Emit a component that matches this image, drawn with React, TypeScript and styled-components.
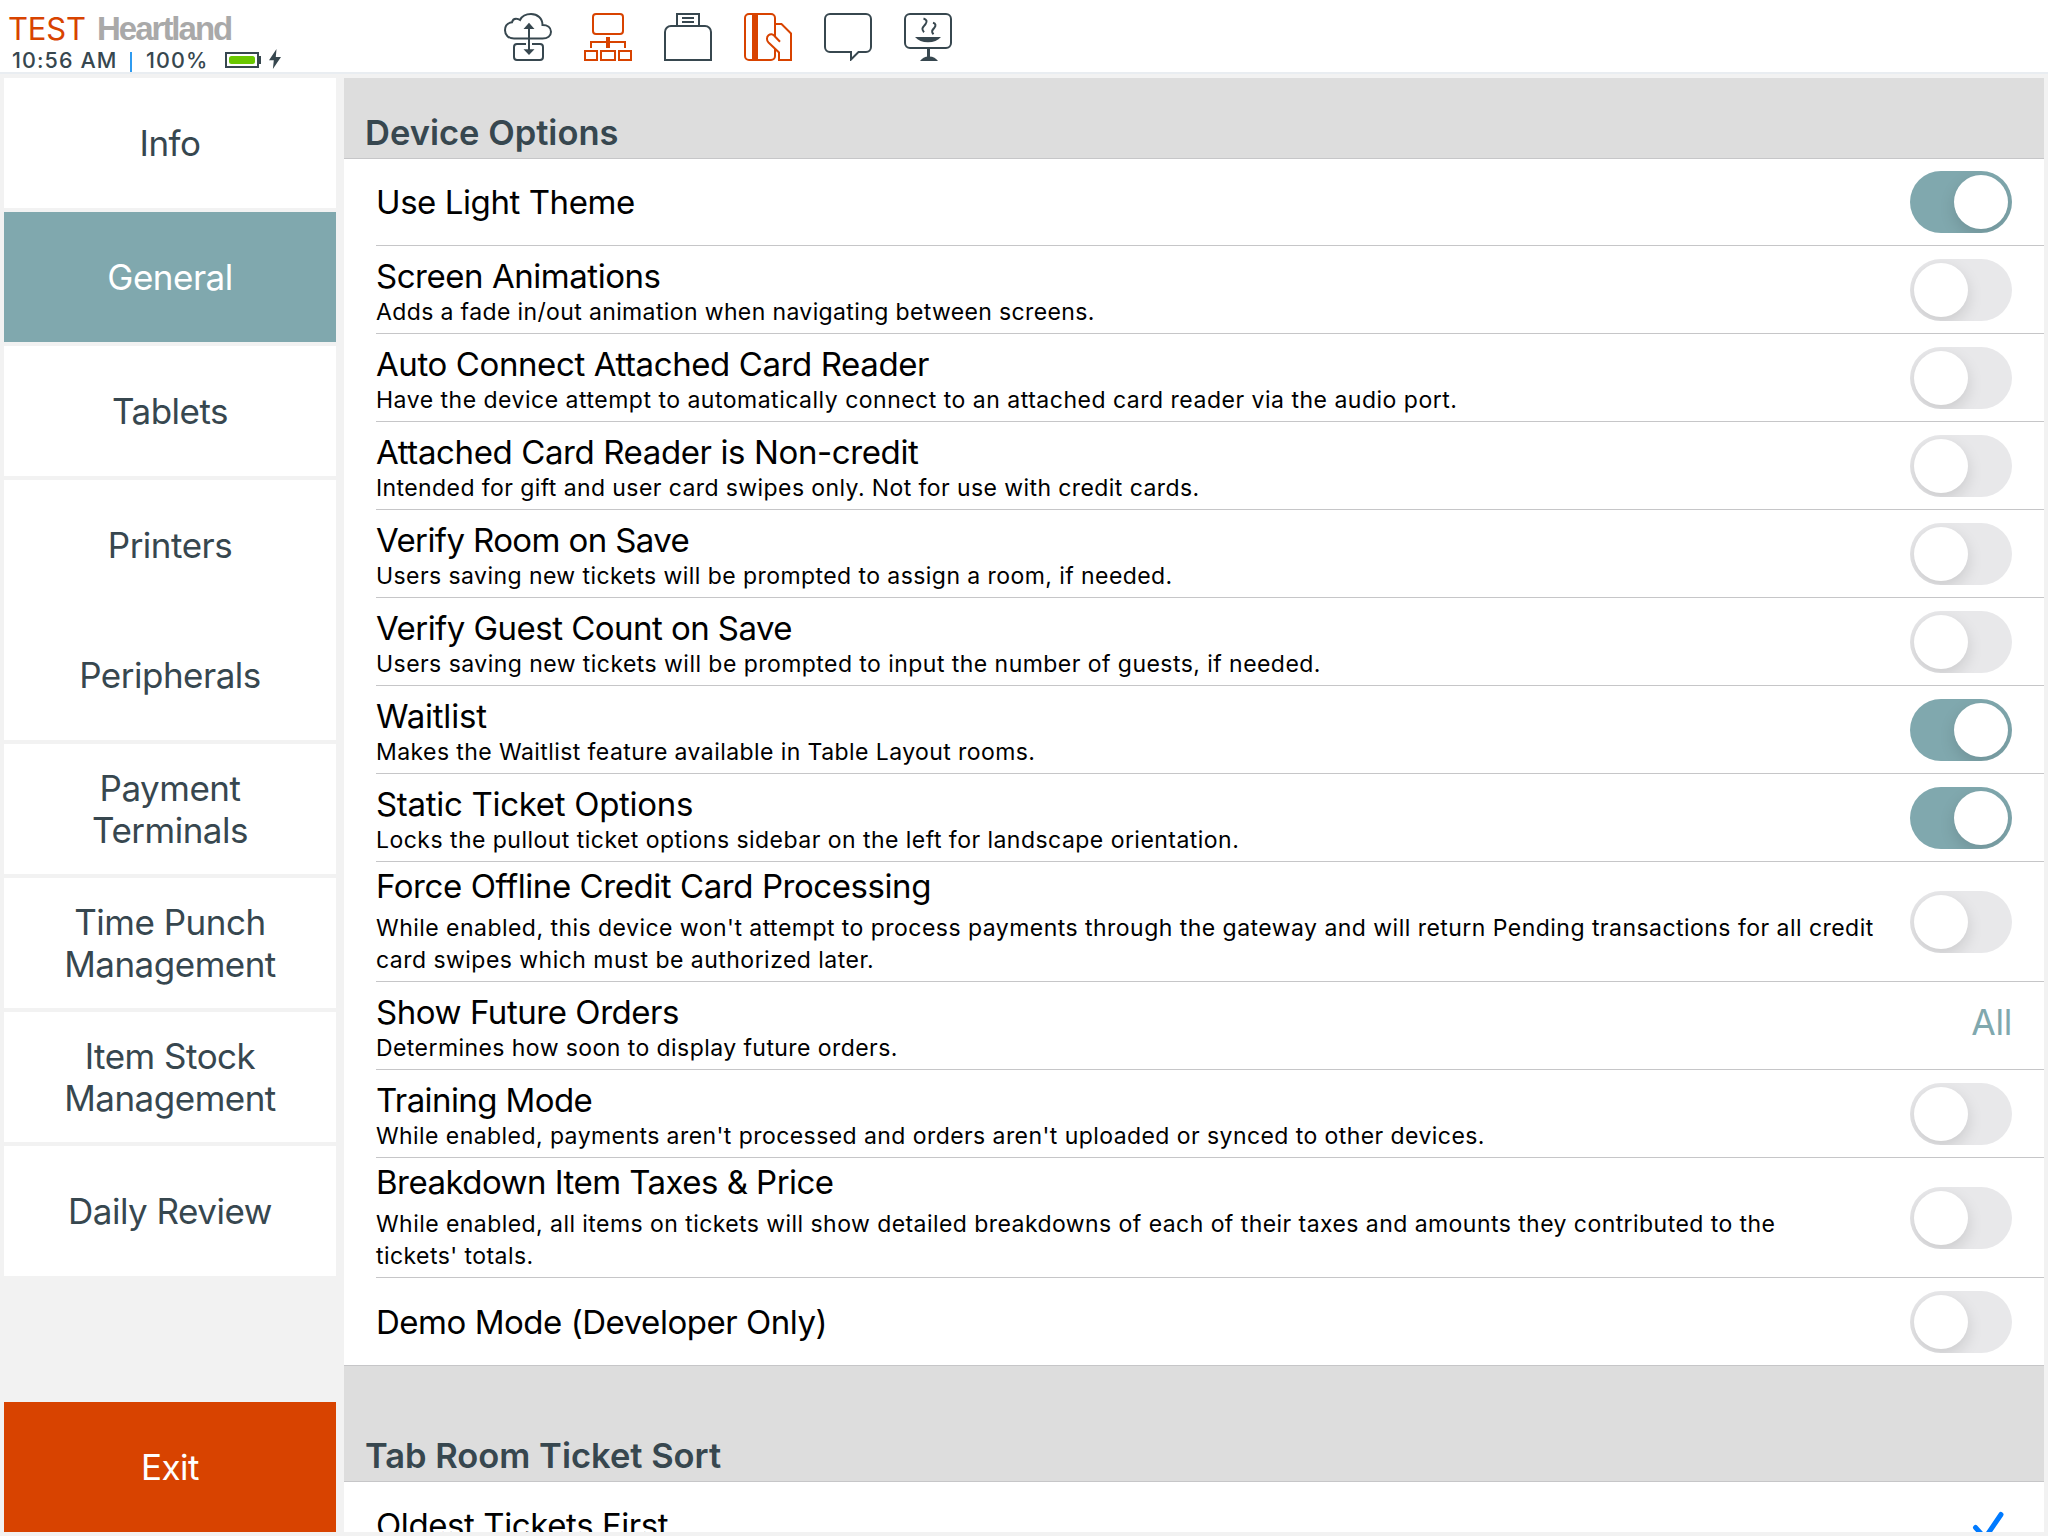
import React, { useState } from "react";
import styled, { createGlobalStyle } from "styled-components";

const ink = "#37474f";
const orange = "#d84300";
const teal = "#80a8ae";
const hairline = "#c6c6c8";

const GlobalStyle = createGlobalStyle`
  *, *::before, *::after { box-sizing: border-box; }
  body {
    margin: 0;
    overflow: hidden;
    background: #f2f2f2;
    font-family: Inter, "Liberation Sans", sans-serif;
    color: #000;
  }
  button { font: inherit; border: 0; margin: 0; padding: 0; background: none; }
`;

const Screen = styled.div`
  width: 2048px;
  height: 1536px;
  display: flex;
  flex-direction: column;
  overflow: hidden;
`;

/* ---------- top bar ---------- */

const TopBar = styled.header`
  flex: none;
  height: 74px;
  display: flex;
  background: #fff;
  border-bottom: 2px solid #e9edf1;
`;

const Status = styled.div`
  width: 504px;
  padding: 9px 0 0 8px;
  display: flex;
  flex-direction: column;
`;

const BrandLine = styled.div`
  height: 39px;
  line-height: 40px;
  display: flex;
  align-items: baseline;
`;

const Mode = styled.span`
  width: 89px;
  font-size: 31px;
  letter-spacing: -0.2px;
  color: ${orange};
`;

const Brand = styled.span`
  font-family: "Liberation Sans", Arial, sans-serif;
  font-weight: 700;
  font-size: 33px;
  letter-spacing: -2px;
  color: #a9a9a9;
`;

const StatusLine = styled.div`
  height: 24px;
  padding-left: 4px;
  display: flex;
  align-items: center;
  font-size: 21.5px;
  font-weight: 500;
  line-height: 24px;
  letter-spacing: 1.1px;
  color: ${ink};
`;

const Clock = styled.span`
  width: 118px;
  white-space: nowrap;
`;

const Bar = styled.i`
  width: 2px;
  height: 20px;
  margin-top: 3px;
  background: #2f9bf0;
`;

const Charge = styled.span`
  width: 79px;
  margin-left: 14px;
`;

const Tools = styled.nav`
  display: flex;
  gap: 32px;
  padding-top: 13px;
`;

const Tool = styled.button<{ $alert?: boolean }>`
  width: 48px;
  height: 48px;
  color: ${(p) => (p.$alert ? orange : ink)};
  svg {
    display: block;
    fill: none;
    stroke: currentColor;
    stroke-width: 2;
  }
`;

/* ---------- body ---------- */

const Body = styled.div`
  flex: 1;
  min-height: 0;
  display: flex;
  gap: 8px;
  padding: 4px;
`;

const Sidebar = styled.aside`
  flex: none;
  width: 332px;
  display: flex;
  flex-direction: column;
  justify-content: space-between;
`;

const NavGroups = styled.div`
  display: flex;
  flex-direction: column;
  gap: 4px;
`;

const NavButton = styled.button<{ $tone?: "active" | "exit" }>`
  width: 100%;
  height: 130px;
  display: flex;
  align-items: center;
  justify-content: center;
  white-space: pre-line;
  text-align: center;
  font-size: 35px;
  line-height: 42px;
  letter-spacing: -0.5px;
  color: ${(p) => (p.$tone ? "#fff" : ink)};
  background: ${(p) => (p.$tone === "active" ? teal : p.$tone === "exit" ? orange : "#fff")};
`;

const Content = styled.main`
  flex: 1;
  min-width: 0;
  overflow: hidden;
  background: #fff;
`;

const SectionHead = styled.h2<{ $height: number }>`
  margin: 0;
  height: ${(p) => p.$height}px;
  padding: 0 0 3px 21px;
  display: flex;
  align-items: flex-end;
  background: #dddddd;
  color: ${ink};
  font-size: 34.5px;
  font-weight: 600;
  line-height: 44px;
  letter-spacing: 0;
`;

const List = styled.div`
  border-top: 1px solid ${hairline};
  border-bottom: 1px solid ${hairline};
`;

const Row = styled.div<{ $height: number }>`
  height: ${(p) => p.$height}px;
  margin-left: 32px;
  padding-right: 32px;
  display: flex;
  justify-content: space-between;
  align-items: center;
  border-bottom: 1px solid ${hairline};
  &:last-child { border-bottom: 0; }
`;

const Label = styled.div<{ $top: number; $bottom: number }>`
  padding-top: ${(p) => p.$top}px;
  padding-bottom: ${(p) => p.$bottom}px;
`;

const Title = styled.div<{ $track: number }>`
  font-size: 33px;
  line-height: 40px;
  letter-spacing: ${(p) => p.$track}px;
  white-space: nowrap;
`;

const Note = styled.div<{ $track: number; $gap: number }>`
  margin-top: ${(p) => p.$gap}px;
  font-size: 23px;
  line-height: 32px;
  letter-spacing: ${(p) => p.$track}px;
  white-space: pre;
`;

const Track = styled.button<{ $on: boolean; $shift: number }>`
  flex: none;
  width: 102px;
  height: 62px;
  margin-top: ${(p) => p.$shift}px;
  padding: 4px;
  display: flex;
  justify-content: ${(p) => (p.$on ? "flex-end" : "flex-start")};
  border-radius: 31px;
  overflow: hidden;
  background: ${(p) => (p.$on ? teal : "#e8e8ea")};
`;

const Knob = styled.span`
  width: 54px;
  height: 54px;
  border-radius: 50%;
  background: #fff;
  box-shadow: 0 6px 16px rgba(0, 0, 0, 0.13);
`;

const Value = styled.span`
  padding-bottom: 5px;
  font-size: 35.5px;
  line-height: 42px;
  letter-spacing: -0.3px;
  color: ${teal};
`;

const Check = styled.svg`
  display: block;
  margin-right: 2px;
  fill: none;
  stroke: #007aff;
  stroke-width: 5;
  stroke-linecap: round;
  stroke-linejoin: round;
`;

/* ---------- icons ---------- */

const Battery = () => (
  <svg width="36" height="16" viewBox="0 0 36 16">
    <rect x="1" y="1" width="32" height="14" fill="none" stroke={ink} strokeWidth="2" />
    <rect x="34" y="4" width="2" height="8" fill={ink} />
    <rect x="4" y="4" width="26" height="8" rx="2.5" fill="#6ac800" />
  </svg>
);

const BoltIcon = styled.svg`
  margin: -2px 0 0 8px;
`;

const Bolt = () => (
  <BoltIcon width="12" height="20" viewBox="0 0 12 20">
    <path d="M7.5 0 0 11.2H4.8L3.9 20 12 8H6.8Z" fill={ink} />
  </BoltIcon>
);

const CloudSync = () => (
  <svg width="48" height="48" viewBox="0 0 48 48">
    <path d="M10 25.5C4.5 25.5 1 22 1 17.2 1 12.6 4 9.8 8 9.3 8.6 6.6 10.6 5.6 12.6 5.8 14 5.9 15 6.4 16 7 18 3 22 1 27 1c6.500 0 11.500 4.500 11.500 11C43.500 12 47 14.500 47 18.700c0 4.200-3.500 6.800-8.500 6.800Z" />
    <path d="M22 31H13a3 3 0 0 0-3 3V44a3 3 0 0 0 3 3H36a3 3 0 0 0 3-3V34a3 3 0 0 0-3-3H28" />
    <path d="M25 14V38" />
    <path d="M25 9.700 30.500 16H19.500ZM25 42 30.500 36.300H19.500Z" fill="currentColor" stroke="none" />
  </svg>
);

const Network = () => (
  <svg width="48" height="48" viewBox="0 0 48 48">
    <rect x="9" y="1" width="30" height="20" rx="3" />
    <path d="M7 35V29H41V35" />
    <path d="M24 24V35" strokeWidth="4" />
    <path d="M1 38H13V47H1ZM17 38H31V47H17ZM35 38H47V47H35Z" />
  </svg>
);

const Drawer = () => (
  <svg width="48" height="48" viewBox="0 0 48 48">
    <path d="M1 47V19a6 6 0 0 1 6-6H41a6 6 0 0 1 6 6V47Z" />
    <path d="M13 13V1H35V13M18 5H30M18 9H30" />
  </svg>
);

const CardSwipe = () => (
  <svg width="48" height="48" viewBox="0 0 48 48">
    <path d="M31 23V5a4 4 0 0 0-4-4H5a4 4 0 0 0-4 4V43a4 4 0 0 0 4 4H27a4 4 0 0 0 4-4V36" />
    <path d="M11 1V47" strokeWidth="6" />
    <path d="M31 11H37.500L47 20.500V47H35V39.500L24.500 29.500C22.400 27.400 22.500 24 24.500 22.300 26.500 20.600 29 21 30.500 23L36 28.700" />
  </svg>
);

const Chat = () => (
  <svg width="48" height="48" viewBox="0 0 48 48">
    <path d="M6 1H42a5 5 0 0 1 5 5V34a5 5 0 0 1-5 5H34.500L27 46.500V39H6a5 5 0 0 1-5-5V6a5 5 0 0 1 5-5Z" />
  </svg>
);

const Kitchen = () => (
  <svg width="48" height="48" viewBox="0 0 48 48">
    <rect x="1" y="1" width="46" height="34" rx="5" />
    <path d="M24.500 36V45" strokeWidth="3" />
    <path d="M16 48C18 45.500 20.500 43.500 25 43.500S32 45.500 34 48Z" fill="currentColor" stroke="none" />
    <path d="M11 24H37C34 27.500 29.500 29.200 24 29.200S14 27.500 11 24Z" fill="currentColor" stroke="none" />
    <path d="M19.500 5.500c3.200 1 4 3 2 5.700s-5 4.200-1.500 8M29 9.800c2.800.8 3.200 2.700 1.300 5s-3.500 3.800-.8 6.400" />
  </svg>
);

/* ---------- data ---------- */

const tools = [
  { name: "Sync", Icon: CloudSync },
  { name: "Network", Icon: Network, alert: true },
  { name: "Cash drawer", Icon: Drawer },
  { name: "Card reader", Icon: CardSwipe, alert: true },
  { name: "Messages", Icon: Chat },
  { name: "Kitchen display", Icon: Kitchen },
];

const navGroups = [
  ["Info"],
  ["General"],
  ["Tablets"],
  ["Printers", "Peripherals"],
  ["Payment\nTerminals"],
  ["Time Punch\nManagement"],
  ["Item Stock\nManagement"],
  ["Daily Review"],
];

type Option = {
  title: string;
  track: number;
  note?: string;
  noteTrack?: number;
  on?: boolean;
  value?: string;
};

const deviceOptions: Option[] = [
  { title: "Use Light Theme", track: -0.43, on: true },
  { title: "Screen Animations", track: -0.46, note: "Adds a fade in/out animation when navigating between screens.", noteTrack: 0.37 },
  { title: "Auto Connect Attached Card Reader", track: -0.4, note: "Have the device attempt to automatically connect to an attached card reader via the audio port.", noteTrack: 0.5 },
  { title: "Attached Card Reader is Non-credit", track: -0.39, note: "Intended for gift and user card swipes only. Not for use with credit cards.", noteTrack: 0.41 },
  { title: "Verify Room on Save", track: -0.61, note: "Users saving new tickets will be prompted to assign a room, if needed.", noteTrack: 0.43 },
  { title: "Verify Guest Count on Save", track: -0.54, note: "Users saving new tickets will be prompted to input the number of guests, if needed.", noteTrack: 0.45 },
  { title: "Waitlist", track: -0.2, note: "Makes the Waitlist feature available in Table Layout rooms.", noteTrack: 0.42, on: true },
  { title: "Static Ticket Options", track: -0.3, note: "Locks the pullout ticket options sidebar on the left for landscape orientation.", noteTrack: 0.465, on: true },
  { title: "Force Offline Credit Card Processing", track: -0.43, note: "While enabled, this device won't attempt to process payments through the gateway and will return Pending transactions for all credit\ncard swipes which must be authorized later.", noteTrack: 0.465 },
  { title: "Show Future Orders", track: -0.45, note: "Determines how soon to display future orders.", noteTrack: 0.43, value: "All" },
  { title: "Training Mode", track: -0.6, note: "While enabled, payments aren't processed and orders aren't uploaded or synced to other devices.", noteTrack: 0.43 },
  { title: "Breakdown Item Taxes & Price", track: -0.54, note: "While enabled, all items on tickets will show detailed breakdowns of each of their taxes and amounts they contributed to the\ntickets' totals.", noteTrack: 0.44 },
  { title: "Demo Mode (Developer Only)", track: -0.47 },
];

function OptionRow({ option, first, last }: { option: Option; first: boolean; last: boolean }) {
  const [on, setOn] = useState(!!option.on);
  const tall = !!option.note?.includes("\n");
  const height = tall ? 120 : first || last ? 87 : 88;
  return (
    <Row $height={height}>
      <Label $top={option.note && !tall ? 5 : 0} $bottom={tall ? 1 : 0}>
        <Title $track={option.track}>{option.title}</Title>
        {option.note && (
          <Note $track={option.noteTrack ?? 0.43} $gap={tall ? 6 : 0}>
            {option.note}
          </Note>
        )}
      </Label>
      {option.value ? (
        <Value>{option.value}</Value>
      ) : (
        <Track $on={on} $shift={first ? 0 : 1} onClick={() => setOn(!on)} aria-label={option.title}>
          <Knob />
        </Track>
      )}
    </Row>
  );
}

export default function App() {
  return (
    <>
      <GlobalStyle />
      <Screen>
        <TopBar>
          <Status>
            <BrandLine>
              <Mode>TEST</Mode>
              <Brand>Heartland</Brand>
            </BrandLine>
            <StatusLine>
              <Clock>10:56 AM</Clock>
              <Bar />
              <Charge>100%</Charge>
              <Battery />
              <Bolt />
            </StatusLine>
          </Status>
          <Tools>
            {tools.map(({ name, Icon, alert }) => (
              <Tool key={name} $alert={alert} aria-label={name}>
                <Icon />
              </Tool>
            ))}
          </Tools>
        </TopBar>
        <Body>
          <Sidebar>
            <NavGroups>
              {navGroups.map((group) => (
                <div key={group[0]}>
                  {group.map((name) => (
                    <NavButton key={name} $tone={name === "General" ? "active" : undefined}>
                      {name}
                    </NavButton>
                  ))}
                </div>
              ))}
            </NavGroups>
            <NavButton $tone="exit">Exit</NavButton>
          </Sidebar>
          <Content>
            <SectionHead $height={80}>Device Options</SectionHead>
            <List>
              {deviceOptions.map((option, i) => (
                <OptionRow
                  key={option.title}
                  option={option}
                  first={i === 0}
                  last={i === deviceOptions.length - 1}
                />
              ))}
            </List>
            <SectionHead $height={115}>Tab Room Ticket Sort</SectionHead>
            <List>
              <Row $height={87}>
                <Label $top={0} $bottom={2}>
                  <Title $track={-0.4}>Oldest Tickets First</Title>
                </Label>
                <Check width="40" height="32" viewBox="0 0 40 32">
                  <path d="M5.500 17.500 15 28 31 4.500" />
                </Check>
              </Row>
            </List>
          </Content>
        </Body>
      </Screen>
    </>
  );
}
